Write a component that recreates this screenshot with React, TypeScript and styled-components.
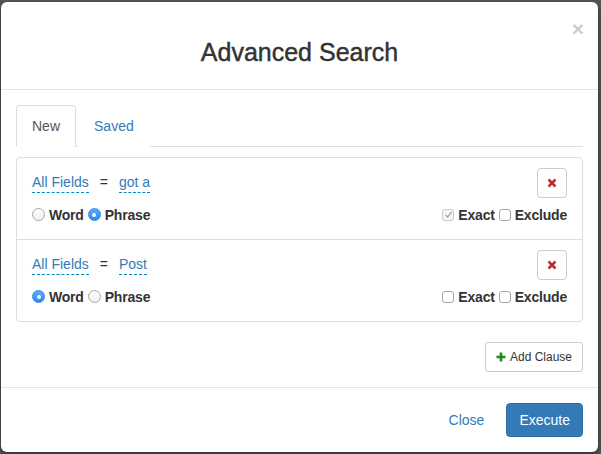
import React from 'react'
import styled, { createGlobalStyle } from 'styled-components'

const GlobalStyle = createGlobalStyle`
  html, body {
    margin: 0;
    padding: 0;
    background: #585858;
  }
  body {
    font-family: "Liberation Sans", Arial, Helvetica, sans-serif;
    font-size: 14px;
    line-height: 1.42857;
    color: #333;
  }
  * { box-sizing: border-box; }
`

const Backdrop = styled.div`
  width: 601px;
  height: 454px;
  padding: 2px 3px 2px 1px;
`

const Modal = styled.div`
  position: relative;
  width: 597px;
  height: 450px;
  background: #fff;
  border-radius: 6px;
  box-shadow: 0 3px 9px rgba(0, 0, 0, 0.5);
  display: flex;
  flex-direction: column;
`

const Header = styled.div`
  padding: 15px 15px 14px;
  border-bottom: 1px solid #e5e5e5;
`

const Title = styled.h3`
  margin: 22px 0 8px;
  font-size: 25px;
  font-weight: 500;
  line-height: 1.1;
  text-align: center;
  color: #333;
  -webkit-text-stroke: 0.45px #333;
`

const CloseX = styled.button`
  position: absolute;
  top: 16px;
  right: 14px;
  padding: 0;
  border: 0;
  background: transparent;
  font-family: "Liberation Sans", Arial, sans-serif;
  font-size: 21px;
  font-weight: bold;
  line-height: 1;
  color: #000;
  opacity: 0.2;
`

const Body = styled.div`
  padding: 15px;
  display: flex;
  flex-direction: column;
`

const Tabs = styled.ul`
  display: flex;
  margin: 0;
  padding: 0;
  list-style: none;
  border-bottom: 1px solid #ddd;
`

const Tab = styled.li<{ $active?: boolean }>`
  margin-bottom: -1px;
  margin-right: 2px;
  padding: 10px 15px;
  line-height: 20px;
  border: 1px solid ${p => (p.$active ? '#ddd' : 'transparent')};
  border-bottom-color: transparent;
  border-radius: 4px 4px 0 0;
  background: #fff;
  color: ${p => (p.$active ? '#555' : '#337ab7')};
`

const Panel = styled.div`
  margin-top: 10px;
  border: 1px solid #ddd;
  border-radius: 4px;
`

const Clause = styled.div`
  padding: 10px 15px 14px;
  & + & {
    border-top: 1px solid #ddd;
  }
`

const ClauseTop = styled.div`
  display: flex;
  align-items: center;
  justify-content: space-between;
  height: 30px;
`

const Expr = styled.div`
  display: flex;
  align-items: center;
`

const Editable = styled.span`
  display: inline-block;
  line-height: 20px;
  color: #337ab7;
  border-bottom: 1px dashed #0088cc;
`

const Equals = styled.span`
  margin: 0 11px;
  color: #333;
`

const RemoveButton = styled.button`
  width: 30px;
  height: 30px;
  padding: 0;
  border: 1px solid #ccc;
  border-radius: 4px;
  background: #fff;
  display: flex;
  align-items: center;
  justify-content: center;
`

const ClauseBottom = styled.div`
  margin-top: 7px;
  height: 20px;
  display: flex;
  align-items: center;
  justify-content: space-between;
`

const OptionGroup = styled.div`
  display: flex;
  align-items: center;
  gap: 4px;
`

const Option = styled.label`
  display: flex;
  align-items: center;
  gap: 4px;
  font-weight: bold;
  letter-spacing: -0.2px;
  color: #333;
  line-height: 20px;
`

const Radio = styled.span<{ $checked?: boolean }>`
  width: 13px;
  height: 13px;
  border-radius: 50%;
  display: flex;
  align-items: center;
  justify-content: center;
  border: 1px solid ${p => (p.$checked ? '#2f86ec' : '#a6a6a6')};
  background: ${p =>
    p.$checked
      ? 'linear-gradient(#5aaaff, #2b8cf5)'
      : 'linear-gradient(#ffffff, #f0f0f0)'};

  &::after {
    content: '';
    display: ${p => (p.$checked ? 'block' : 'none')};
    width: 4px;
    height: 4px;
    border-radius: 50%;
    background: #fff;
  }
`

const Checkbox = styled.span<{ $checked?: boolean }>`
  width: 12px;
  height: 12px;
  border-radius: 3px;
  display: flex;
  align-items: center;
  justify-content: center;
  border: 1px solid ${p => (p.$checked ? '#c9c9c9' : '#a6a6a6')};
  background: ${p => (p.$checked ? '#f6f6f6' : '#fff')};
`

const Actions = styled.div`
  margin-top: 20px;
  display: flex;
  justify-content: flex-end;
`

const SmallButton = styled.button`
  display: flex;
  align-items: center;
  gap: 4px;
  height: 30px;
  padding: 5px 10px;
  font-family: "Liberation Sans", Arial, sans-serif;
  font-size: 12px;
  line-height: 1.5;
  color: #333;
  background: #fff;
  border: 1px solid #ccc;
  border-radius: 3px;
`

const Footer = styled.div`
  margin-top: auto;
  padding: 15px;
  border-top: 1px solid #e5e5e5;
  display: flex;
  justify-content: flex-end;
  align-items: center;
  gap: 9px;
`

const FooterButton = styled.button<{ $primary?: boolean }>`
  height: 34px;
  padding: 6px 12px;
  font-family: "Liberation Sans", Arial, sans-serif;
  font-size: 14px;
  line-height: 20px;
  border-radius: 4px;
  border: 1px solid ${p => (p.$primary ? '#2e6da4' : 'transparent')};
  background: ${p => (p.$primary ? '#337ab7' : 'transparent')};
  color: ${p => (p.$primary ? '#fff' : '#337ab7')};
`

const RemoveIcon = () => (
  <svg width="10" height="10" viewBox="0 0 10 10">
    <path d="M1.5 1.5 L8.5 8.5 M8.5 1.5 L1.5 8.5" stroke="#c22b30" strokeWidth="2.6" />
  </svg>
)

const PlusIcon = () => (
  <svg width="10" height="10" viewBox="0 0 10 10">
    <path d="M5 0.5 V9.5 M0.5 5 H9.5" stroke="#1f8a1f" strokeWidth="2.6" />
  </svg>
)

const CheckMark = () => (
  <svg width="9" height="9" viewBox="0 0 9 9">
    <path d="M1.5 4.8 L3.6 7 L7.6 1.8" stroke="#9a9a9a" strokeWidth="1.2" fill="none" />
  </svg>
)

type ClauseData = {
  field: string
  value: string
  phrase: boolean
  exact: boolean
}

const clauses: ClauseData[] = [
  { field: 'All Fields', value: 'got a', phrase: true, exact: true },
  { field: 'All Fields', value: 'Post', phrase: false, exact: false },
]

export default function App() {
  return (
    <>
      <GlobalStyle />
      <Backdrop>
        <Modal>
          <Header>
            <Title>Advanced Search</Title>
            <CloseX>×</CloseX>
          </Header>
          <Body>
            <Tabs>
              <Tab $active>New</Tab>
              <Tab>Saved</Tab>
            </Tabs>
            <Panel>
              {clauses.map((c, i) => (
                <Clause key={i}>
                  <ClauseTop>
                    <Expr>
                      <Editable>{c.field}</Editable>
                      <Equals>=</Equals>
                      <Editable>{c.value}</Editable>
                    </Expr>
                    <RemoveButton>
                      <RemoveIcon />
                    </RemoveButton>
                  </ClauseTop>
                  <ClauseBottom>
                    <OptionGroup>
                      <Option>
                        <Radio $checked={!c.phrase} />
                        Word
                      </Option>
                      <Option>
                        <Radio $checked={c.phrase} />
                        Phrase
                      </Option>
                    </OptionGroup>
                    <OptionGroup>
                      <Option>
                        <Checkbox $checked={c.exact}>{c.exact && <CheckMark />}</Checkbox>
                        Exact
                      </Option>
                      <Option>
                        <Checkbox />
                        Exclude
                      </Option>
                    </OptionGroup>
                  </ClauseBottom>
                </Clause>
              ))}
            </Panel>
            <Actions>
              <SmallButton>
                <PlusIcon />
                Add Clause
              </SmallButton>
            </Actions>
          </Body>
          <Footer>
            <FooterButton>Close</FooterButton>
            <FooterButton $primary>Execute</FooterButton>
          </Footer>
        </Modal>
      </Backdrop>
    </>
  )
}
